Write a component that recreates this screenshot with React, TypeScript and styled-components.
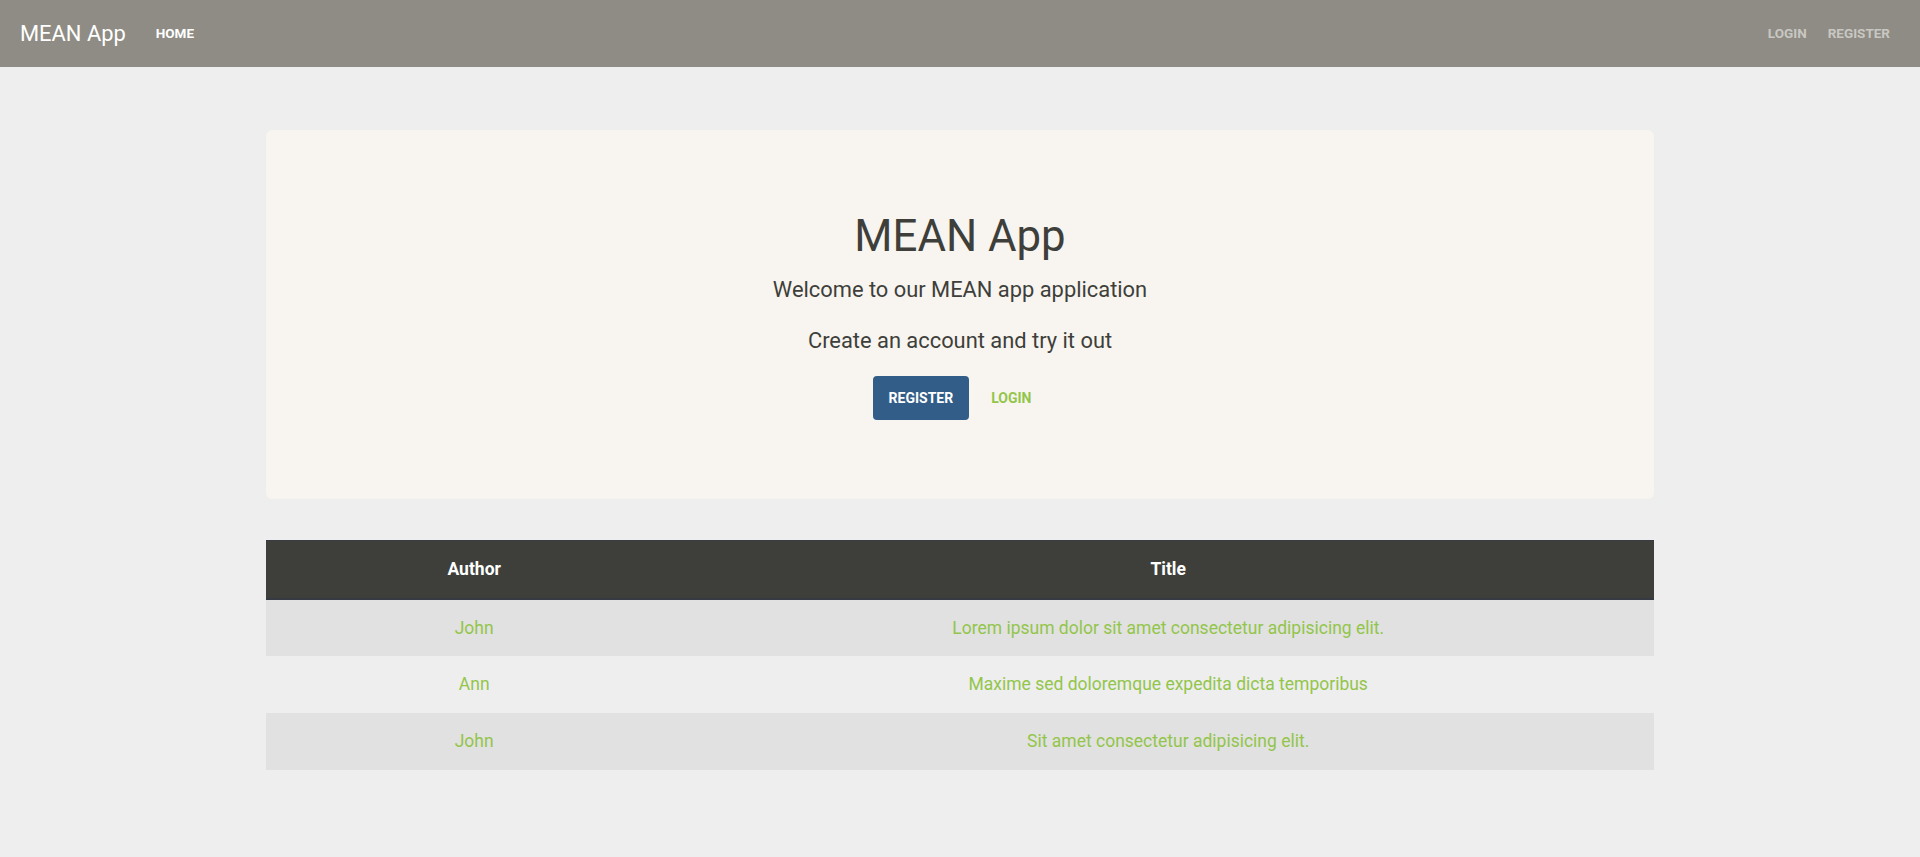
import React from "react";
import styled, { createGlobalStyle } from "styled-components";

const GlobalStyle = createGlobalStyle`
  * { box-sizing: border-box; }
  html, body { margin: 0; padding: 0; }
  body {
    background: #eeeeee;
    font-family: Roboto, "Liberation Sans", Arial, sans-serif;
    font-size: 17.5px;
    color: #3e3f3a;
  }
`;

const Navbar = styled.nav`
  height: 67px;
  background: #8e8c84;
  display: flex;
  align-items: center;
  padding: 0 30px 0 20px;
`;

const Brand = styled.a`
  font-size: 21.9px;
  color: #ffffff;
  text-decoration: none;
  margin-right: 30px;
  line-height: 1;
`;

const NavList = styled.div<{ $right?: boolean }>`
  display: flex;
  align-items: center;
  gap: 21px;
  margin-left: ${(p) => (p.$right ? "auto" : "0")};
`;

const NavLink = styled.a<{ $active?: boolean }>`
  font-size: 13.5px;
  font-weight: 700;
  text-transform: uppercase;
  text-decoration: none;
  color: ${(p) => (p.$active ? "#ffffff" : "#c9c7c2")};
  line-height: 1;
`;

const Container = styled.main`
  width: 1388px;
  margin: 63px auto 0;
`;

const Jumbotron = styled.section`
  background: #f8f5f0;
  border-radius: 6px;
  height: 369px;
  padding-top: 80px;
  display: flex;
  flex-direction: column;
  align-items: center;
  text-align: center;
`;

const Title = styled.h1`
  margin: 0;
  font-size: 43.75px;
  font-weight: 400;
  line-height: 52.5px;
  color: #3e3f3a;
`;

const Lead = styled.p<{ $gap: number }>`
  margin: ${(p) => p.$gap}px 0 0;
  font-size: 21.875px;
  line-height: 33px;
  color: #3e3f3a;
`;

const Actions = styled.div`
  margin-top: 19px;
  display: flex;
  gap: 6px;
`;

const Button = styled.a<{ $primary?: boolean }>`
  height: 44px;
  padding: 0 16px;
  display: inline-flex;
  align-items: center;
  justify-content: center;
  border-radius: 4px;
  font-size: 14px;
  font-weight: 700;
  text-transform: uppercase;
  text-decoration: none;
  background: ${(p) => (p.$primary ? "#325d88" : "transparent")};
  color: ${(p) => (p.$primary ? "#ffffff" : "#93c54b")};
`;

const Table = styled.table`
  width: 100%;
  margin-top: 41px;
  border-collapse: collapse;
  font-size: 17.5px;
`;

const HeadCell = styled.th<{ $w?: string }>`
  width: ${(p) => p.$w || "auto"};
  background: #3e3f3a;
  color: #ffffff;
  font-weight: 700;
  height: 58px;
  padding: 0;
  text-align: center;
  border-top: 1px solid #383b40;
  border-bottom: 2px solid #363a42;
`;

const Row = styled.tr<{ $odd: boolean }>`
  background: ${(p) => (p.$odd ? "#e1e1e1" : "#eeeeee")};
  & + & td {
    border-top: 1px solid #dfd7ca;
  }
`;

const Cell = styled.td`
  height: 57px;
  padding: 0;
  text-align: center;
  color: #93c54b;
`;

const books = [
  { author: "John", title: "Lorem ipsum dolor sit amet consectetur adipisicing elit." },
  { author: "Ann", title: "Maxime sed doloremque expedita dicta temporibus" },
  { author: "John", title: "Sit amet consectetur adipisicing elit." },
];

export default function App() {
  return (
    <>
      <GlobalStyle />
      <Navbar>
        <Brand href="#">MEAN App</Brand>
        <NavList>
          <NavLink href="#" $active>Home</NavLink>
        </NavList>
        <NavList $right>
          <NavLink href="#">Login</NavLink>
          <NavLink href="#">Register</NavLink>
        </NavList>
      </Navbar>
      <Container>
        <Jumbotron>
          <Title>MEAN App</Title>
          <Lead $gap={10}>Welcome to our MEAN app application</Lead>
          <Lead $gap={18}>Create an account and try it out</Lead>
          <Actions>
            <Button href="#" $primary>Register</Button>
            <Button href="#">Login</Button>
          </Actions>
        </Jumbotron>
        <Table>
          <thead>
            <tr>
              <HeadCell $w="30%">Author</HeadCell>
              <HeadCell>Title</HeadCell>
            </tr>
          </thead>
          <tbody>
            {books.map((b, i) => (
              <Row key={i} $odd={i % 2 === 0}>
                <Cell>{b.author}</Cell>
                <Cell>{b.title}</Cell>
              </Row>
            ))}
          </tbody>
        </Table>
      </Container>
    </>
  );
}
